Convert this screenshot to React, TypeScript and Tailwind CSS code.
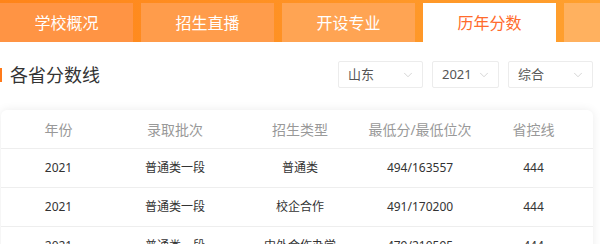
import { ChevronDown } from "lucide-react";

const tabs = [
  { label: "学校概况", bg: "bg-[#ff9444]" },
  { label: "招生直播", bg: "bg-[#ff9c4b]" },
  { label: "开设专业", bg: "bg-[#ffa453]" },
  { label: "历年分数", bg: "bg-white", active: true },
  { label: "", bg: "bg-[#ffb15f]" },
];

const filters = [
  { label: "山东", width: "w-[85px]" },
  { label: "2021", width: "w-[67px]" },
  { label: "综合", width: "w-[85px]" },
];

const headers = ["年份", "录取批次", "招生类型", "最低分/最低位次", "省控线"];

const rows = [
  ["2021", "普通类一段", "普通类", "494/163557", "444"],
  ["2021", "普通类一段", "校企合作", "491/170200", "444"],
  ["2021", "普通类一段", "中外合作办学", "479/210595", "444"],
];

const cols = "grid grid-cols-[115px_118px_132px_108px_119px]";

export default function App() {
  return (
    <div
      className="w-[600px] h-[244px] overflow-hidden bg-white"
      style={{ fontFamily: '"Noto Sans", "Noto Sans CJK SC", sans-serif' }}
    >
      <nav className="h-[42px] pt-[3px] flex gap-[8px] bg-gradient-to-r from-[#ff8419] to-[#ffa02e]">
        {tabs.map((tab, i) => (
          <div
            key={i}
            className={`w-[133px] shrink-0 flex items-center justify-center text-[16px] ${tab.bg} ${
              tab.active ? "text-[#ff6b2c]" : "text-white"
            }`}
          >
            {tab.label}
          </div>
        ))}
      </nav>
      <main>
        <div className="flex items-center justify-between pr-[7px] pt-[19px]">
          <div className="flex items-center gap-[8px]">
            <span className="w-[2px] h-[14px] bg-[#ff7a1a]" />
            <h2 className="text-[18px] leading-none text-[#333]">各省分数线</h2>
          </div>
          <div className="flex gap-[9px]">
            {filters.map((f) => (
              <div
                key={f.label}
                className={`${f.width} h-[27px] border border-[#ececec] rounded-[2px] flex items-center justify-between pl-[9px] pr-[7px] text-[13px] text-[#555]`}
              >
                {f.label}
                <ChevronDown size={14} strokeWidth={1.2} className="text-[#c4c4c4]" />
              </div>
            ))}
          </div>
        </div>
        <div className="mt-[22px] ml-[1px] w-[592px] bg-white rounded-[6px] shadow-[0_0_10px_rgba(0,0,0,0.08)]">
          <div className={`${cols} h-[39px] items-center text-[14px] text-[#999] border-b border-[#eeeeee]`}>
            {headers.map((h) => (
              <div key={h} className="text-center">
                {h}
              </div>
            ))}
          </div>
          {rows.map((row, i) => (
            <div
              key={i}
              className={`${cols} h-[39px] items-center text-[12px] text-[#333] border-b border-[#eeeeee]`}
            >
              {row.map((cell, j) => (
                <div key={j} className="text-center">
                  {cell}
                </div>
              ))}
            </div>
          ))}
        </div>
      </main>
    </div>
  );
}
